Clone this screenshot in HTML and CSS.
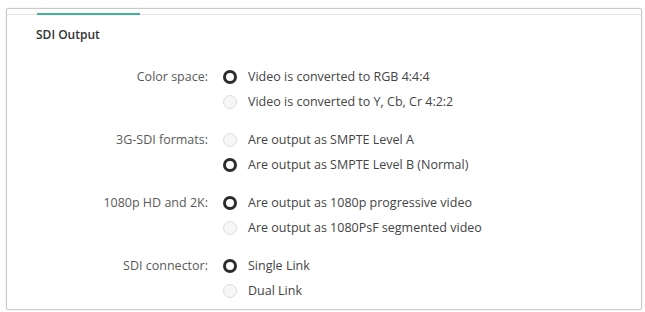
FILE: index.html
```html
<!DOCTYPE html>
<html>
<head>
<meta charset="utf-8">
<link rel="stylesheet" href="styles.css">
</head>
<body>
<div class="panel">
  <div class="tabs"><div class="tab-active"></div></div>
  <div class="title">SDI Output</div>
  <div class="form">
    <div class="group">
      <div class="label">Color space:</div>
      <div class="options">
        <div class="opt"><span class="radio on"></span>Video is converted to RGB 4:4:4</div>
        <div class="opt"><span class="radio"></span>Video is converted to Y, Cb, Cr 4:2:2</div>
      </div>
    </div>
    <div class="group">
      <div class="label">3G-SDI formats:</div>
      <div class="options">
        <div class="opt"><span class="radio"></span>Are output as SMPTE Level A</div>
        <div class="opt"><span class="radio on"></span>Are output as SMPTE Level B (Normal)</div>
      </div>
    </div>
    <div class="group">
      <div class="label">1080p HD and 2K:</div>
      <div class="options">
        <div class="opt"><span class="radio on"></span>Are output as 1080p progressive video</div>
        <div class="opt"><span class="radio"></span>Are output as 1080PsF segmented video</div>
      </div>
    </div>
    <div class="group">
      <div class="label">SDI connector:</div>
      <div class="options">
        <div class="opt"><span class="radio on"></span>Single Link</div>
        <div class="opt"><span class="radio"></span>Dual Link</div>
      </div>
    </div>
  </div>
</div>
</body>
</html>
```
FILE: styles.css
```css
html, body { margin: 0; padding: 0; background: #ffffff; }
body { padding: 8px 3px 2px 6px; font-family: "Open Sans", "Liberation Sans", sans-serif; color: #444; }
.panel {
  border: 1px solid #c9c9c9;
  border-radius: 2px;
  box-shadow: 0 0 2px rgba(0,0,0,0.12);
  background: #fff;
  box-sizing: border-box;
  height: 302px;
}
.tabs {
  margin-top: 5px;
  height: 1px;
  background: #e4e4e4;
  position: relative;
}
.tab-active {
  position: absolute;
  left: 30px;
  top: -1px;
  width: 103px;
  height: 2px;
  background: #3fb39b;
}
.title {
  margin: 11px 0 0 29px;
  font-size: 12px;
  font-weight: 600;
  color: #333;
  height: 18px;
  line-height: 18px;
}
.form {
  margin-top: 20px;
  display: flex;
  flex-direction: column;
  gap: 13px;
}
.group { display: flex; }
.label {
  width: 201px;
  text-align: right;
  font-size: 12.5px;
  line-height: 25px;
  height: 25px;
  color: #5a5a5a;
}
.options { display: flex; flex-direction: column; }
.opt {
  display: flex;
  align-items: center;
  height: 25px;
  font-size: 12.5px;
  color: #444;
}
.radio {
  width: 14px;
  height: 14px;
  box-sizing: border-box;
  border-radius: 50%;
  border: 1px solid #dedede;
  background: #f7f7f7;
  margin: 0 11px 0 15px;
  flex: none;
}
.radio.on {
  border: 3.5px solid #2c2c2c;
  background: #fff;
}
```
